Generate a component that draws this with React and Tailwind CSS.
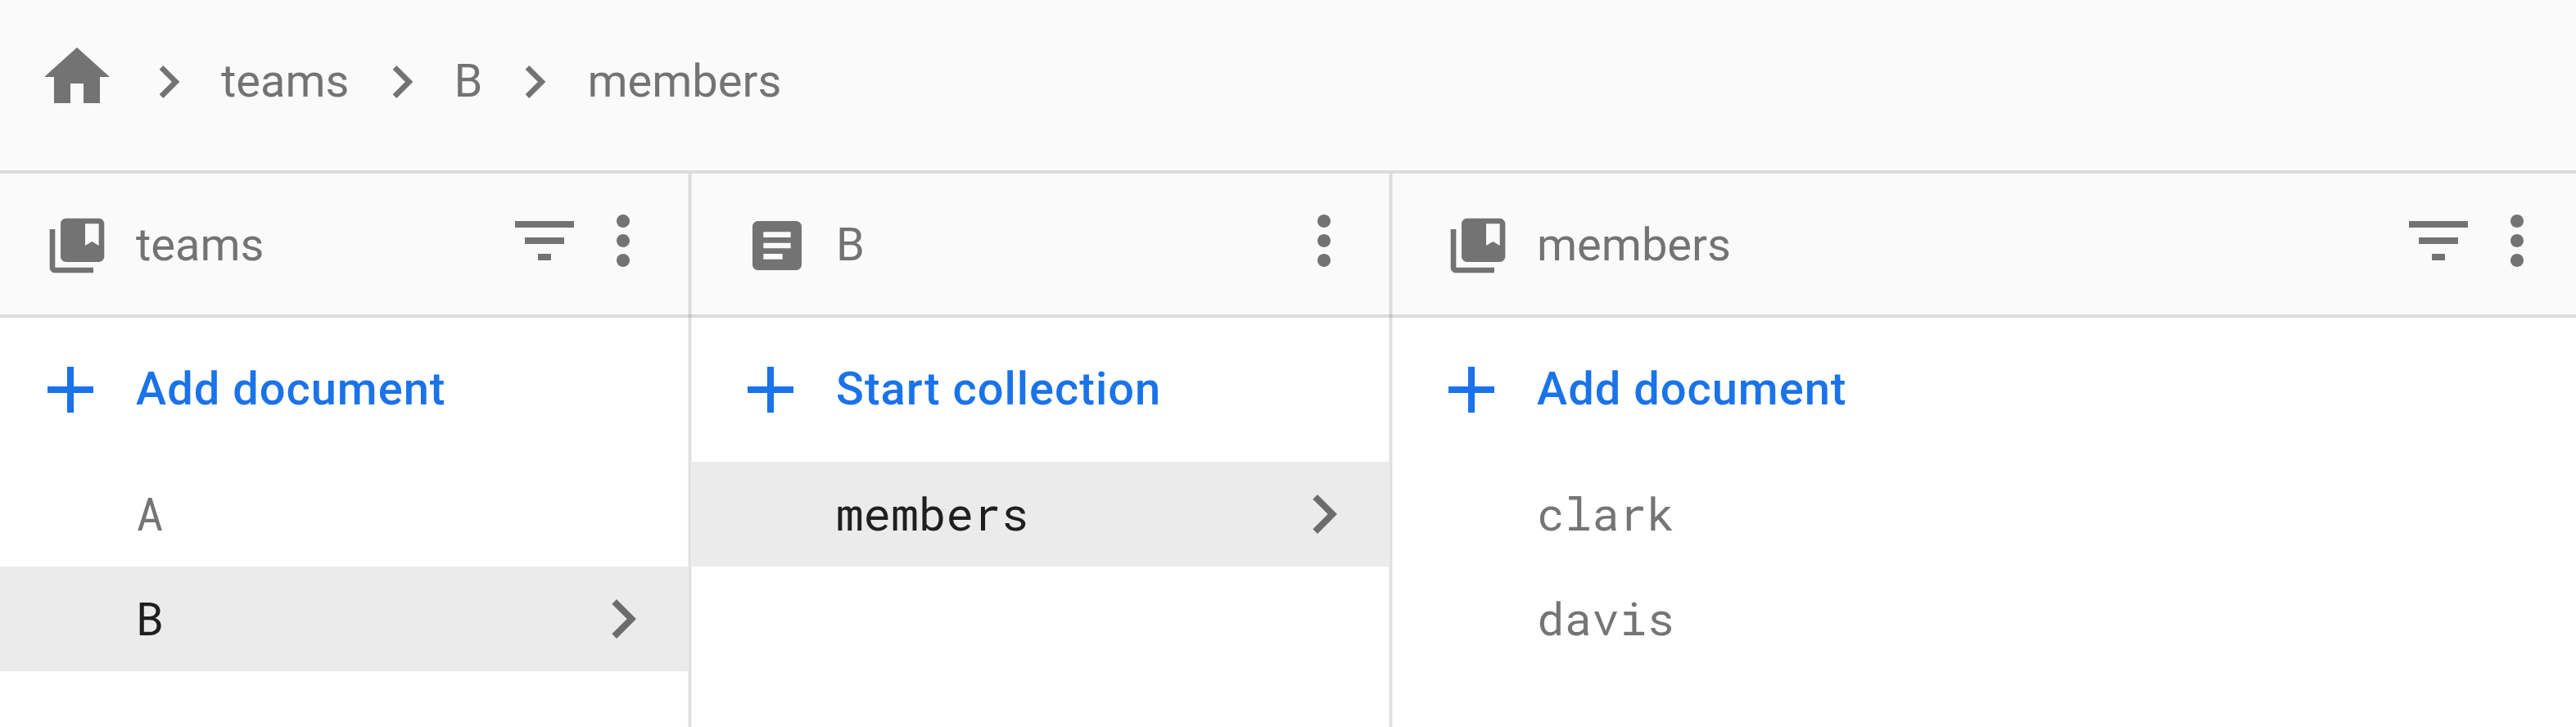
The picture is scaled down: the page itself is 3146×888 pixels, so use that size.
const PATHS = {
  home: 'M10 20v-6h4v6h5v-8h3L12 3 2 12h3v8z',
  chevron: 'M10 6L8.59 7.41 13.17 12l-4.58 4.59L10 18l6-6z',
  collection:
    'M4 6H2v14c0 1.1.9 2 2 2h14v-2H4V6zM20 2H8c-1.1 0-2 .9-2 2v12c0 1.1.9 2 2 2h12c1.1 0 2-.9 2-2V4c0-1.1-.9-2-2-2zm0 10l-2.5-1.5L15 12V4h5v8z',
  document:
    'M19 3H5c-1.1 0-2 .9-2 2v14c0 1.1.9 2 2 2h14c1.1 0 2-.9 2-2V5c0-1.1-.9-2-2-2zm-5 14H7v-2h7v2zm3-4H7v-2h10v2zm0-4H7V7h10v2z',
  filter: 'M10 18h4v-2h-4v2zM3 6v2h18V6H3zm3 7h12v-2H6v2z',
  more: 'M12 8c1.1 0 2-.9 2-2s-.9-2-2-2-2 .9-2 2 .9 2 2 2zm0 2c-1.1 0-2 .9-2 2s.9 2 2 2 2-.9 2-2-.9-2-2-2zm0 6c-1.1 0-2 .9-2 2s.9 2 2 2 2-.9 2-2-.9-2-2-2z',
  add: 'M19 13h-6v6h-2v-6H5v-2h6V5h2v6h6v2z',
};

function Icon({ name, className }) {
  return (
    <svg viewBox="0 0 24 24" fill="currentColor" className={`shrink-0 ${className}`}>
      <path d={PATHS[name]} />
    </svg>
  );
}

function Strips({ className }) {
  return (
    <div className={`flex ${className}`}>
      <div className="w-px bg-black/6" />
      <div className="w-[3px] bg-black/12" />
      <div className="w-px bg-black/6" />
    </div>
  );
}

function Divider() {
  return (
    <div className="flex w-[5px] shrink-0 flex-col">
      <Strips className="h-[172px] bg-[#fafafa]" />
      <Strips className="h-1 bg-[#dcdcdc]" />
      <Strips className="flex-1 bg-white" />
    </div>
  );
}

function Panel({ icon, title, filter, action, items, selected, className, headPad, addPad, rowPad }) {
  return (
    <section className={`flex flex-col ${className}`}>
      <header className={`flex h-44 shrink-0 items-center border-b-4 border-[#dcdcdc] bg-[#fafafa] text-black/54 ${headPad}`}>
        <Icon name={icon} className="mt-1 size-20" />
        <h2 className="mt-0.5 ml-8 flex-1">{title}</h2>
        {filter && <Icon name="filter" className="-mt-2 size-24" />}
        <Icon name="more" className="-mt-2 size-24" />
      </header>
      <button className={`flex h-44 shrink-0 items-center text-left font-medium tracking-[1px] text-[#1a73e8] ${addPad}`}>
        <Icon name="add" className="size-24" />
        <span className="-mt-0.5 ml-8">{action}</span>
      </button>
      <ul className="font-['Roboto_Mono',monospace]">
        {items.map((item) => (
          <li
            key={item}
            className={`flex h-32 items-center justify-between ${rowPad} ${
              item === selected ? 'bg-[#ebebeb] text-black/87' : 'text-black/54'
            }`}
          >
            <span className="-mt-1">{item}</span>
            {item === selected && <Icon name="chevron" className="size-24 text-black/54" />}
          </li>
        ))}
      </ul>
    </section>
  );
}

export default function App() {
  return (
    <div className="flex h-[888px] w-[3146px] flex-col overflow-hidden bg-white font-[Roboto,sans-serif] text-[56px] leading-[72px]">
      <nav className="flex h-[212px] shrink-0 items-center border-b-4 border-[#dcdcdc] bg-[#fafafa] pl-[46px] text-black/54">
        <Icon name="home" className="-mt-5 size-24" />
        <Icon name="chevron" className="-mt-2 ml-6 size-20" />
        <span className="-mt-2.5 ml-6">teams</span>
        <Icon name="chevron" className="-mt-2 ml-6 size-20" />
        <span className="-mt-2.5 ml-6">B</span>
        <Icon name="chevron" className="-mt-2 ml-6 size-20" />
        <span className="-mt-2.5 ml-6">members</span>
      </nav>
      <main className="flex min-h-0 flex-1">
        <Panel
          icon="collection"
          title="teams"
          filter
          action="Add document"
          items={['A', 'B']}
          selected="B"
          className="w-[840px] shrink-0"
          headPad="pl-[54px] pr-[31px]"
          addPad="pl-[38px]"
          rowPad="pl-[166px] pr-[31px]"
        />
        <Divider />
        <Panel
          icon="document"
          title="B"
          action="Start collection"
          items={['members']}
          selected="members"
          className="w-[851px] shrink-0"
          headPad="pl-16 pr-[31px]"
          addPad="pl-12"
          rowPad="pl-44 pr-[31px]"
        />
        <Divider />
        <Panel
          icon="collection"
          title="members"
          filter
          action="Add document"
          items={['clark', 'davis']}
          className="flex-1"
          headPad="pl-16 pr-6"
          addPad="pl-12"
          rowPad="pl-44 pr-6"
        />
      </main>
    </div>
  );
}
